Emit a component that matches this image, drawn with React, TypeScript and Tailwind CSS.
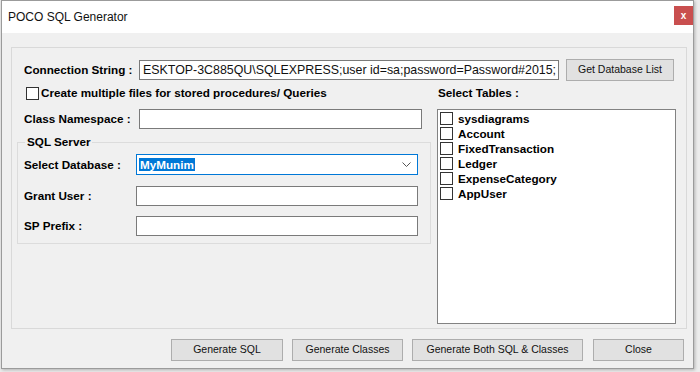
import React from 'react';

const tables = ['sysdiagrams', 'Account', 'FixedTransaction', 'Ledger', 'ExpenseCategory', 'AppUser'];

const Box: React.FC = () => (
  <span className="w-[13px] h-[13px] border border-[#333333] bg-white shrink-0 block" />
);

const WinButton: React.FC<{ label: string; className: string }> = ({ label, className }) => (
  <button className={`h-[22px] border border-[#adadad] bg-[#e1e1e1] text-[10.5px] text-[#111] flex items-center justify-center ${className}`}>
    {label}
  </button>
);

const App: React.FC = () => {
  return (
    <div className="w-[700px] h-[372px] bg-[#ececec] overflow-hidden flex items-start font-['Liberation_Sans',Arial,sans-serif] text-black">
      <div className="ml-[1px] w-[693px] h-[369px] border border-[#9b9b9b] flex flex-col shadow-[1px_1px_3px_rgba(0,0,0,0.25)] bg-[#f0f0f0]">
        {/* title bar */}
        <div className="h-[32px] bg-white flex items-center justify-between pl-[6px] shrink-0">
          <span className="text-[12px] text-[#111]">POCO SQL Generator</span>
          <div className="w-[19px] h-[19px] bg-[#c94f4f] text-white text-[10px] font-bold flex items-center justify-center mt-[-3px] leading-none">
            x
          </div>
        </div>

        {/* body */}
        <div className="flex-1 pt-[14px] pl-[9px] pr-[6px] flex flex-col">
          <div className="h-[282px] border border-[#d9d9d9] flex flex-col">
            {/* connection string */}
            <div className="mt-[11px] h-[22px] flex items-center pl-[12px]">
              <span className="w-[115px] text-[11.7px] font-bold whitespace-nowrap">Connection String :</span>
              <div className="w-[420px] h-[20px] border border-[#7a7a7a] bg-white flex items-center px-[3px] overflow-hidden whitespace-nowrap text-[12.4px] text-[#111]">
                {'ESKTOP-3C885QU\\SQLEXPRESS;user id=sa;password=Password#2015;'}
              </div>
              <WinButton label="Get Database List" className="ml-[7px] w-[108px]" />
            </div>

            <div className="mt-[5px] pl-[5px] flex">
              {/* left column */}
              <div className="w-[414px] flex flex-col">
                <div className="h-[14px] flex items-center pl-[9px]">
                  <Box />
                  <span className="ml-[2px] text-[11.7px] font-bold whitespace-nowrap">
                    Create multiple files for stored procedures/ Queries
                  </span>
                </div>
                <div className="mt-[9px] h-[20px] flex items-center pl-[7px]">
                  <span className="w-[115px] text-[11.7px] font-bold whitespace-nowrap">Class Namespace :</span>
                  <div className="w-[283px] h-[20px] border border-[#7a7a7a] bg-white" />
                </div>
                <fieldset className="mt-[6px] w-[414px] border border-[#dcdcdc] pb-[7px]">
                  <legend className="ml-[7px] px-[2px] text-[11.7px] font-bold leading-[14px]">SQL Server</legend>
                  <div className="mt-[5px] h-[21px] flex items-center pl-[6px]">
                    <span className="w-[112px] text-[11.7px] font-bold whitespace-nowrap">Select Database :</span>
                    <div className="w-[282px] h-[21px] border border-[#0078d7] bg-white flex items-center justify-between pl-[2px] pr-[6px]">
                      <span className="bg-[#0078d7] text-white text-[11.7px] font-bold leading-[13px] px-[1px]">MyMunim</span>
                      <svg width="9" height="6" viewBox="0 0 9 6">
                        <path d="M0.5 0.5 L4.5 4.5 L8.5 0.5" fill="none" stroke="#555" strokeWidth="1" />
                      </svg>
                    </div>
                  </div>
                  <div className="mt-[11px] h-[20px] flex items-center pl-[6px]">
                    <span className="w-[112px] text-[11.7px] font-bold">Grant User :</span>
                    <div className="w-[282px] h-[20px] border border-[#7a7a7a] bg-white" />
                  </div>
                  <div className="mt-[10px] h-[20px] flex items-center pl-[6px]">
                    <span className="w-[112px] text-[11.7px] font-bold">SP Prefix :</span>
                    <div className="w-[282px] h-[20px] border border-[#7a7a7a] bg-white" />
                  </div>
                </fieldset>
              </div>

              {/* right column */}
              <div className="ml-[6px] w-[239px] flex flex-col">
                <div className="h-[14px] flex items-center pl-[1px] text-[11.7px] font-bold">Select Tables :</div>
                <div className="mt-[9px] h-[215px] border border-[#828282] bg-white pt-[1px] pl-[2px]">
                  {tables.map((t) => (
                    <div key={t} className="h-[15px] flex items-center">
                      <Box />
                      <span className="ml-[5px] text-[11.7px] font-bold">{t}</span>
                    </div>
                  ))}
                </div>
              </div>
            </div>
          </div>

          {/* bottom buttons */}
          <div className="mt-[10px] flex justify-end pr-[3px]">
            <WinButton label="Generate SQL" className="w-[112px]" />
            <WinButton label="Generate Classes" className="ml-[9px] w-[111px]" />
            <WinButton label="Generate Both SQL & Classes" className="ml-[9px] w-[171px]" />
            <WinButton label="Close" className="ml-[10px] w-[91px]" />
          </div>
        </div>
      </div>
    </div>
  );
};

export default App;
